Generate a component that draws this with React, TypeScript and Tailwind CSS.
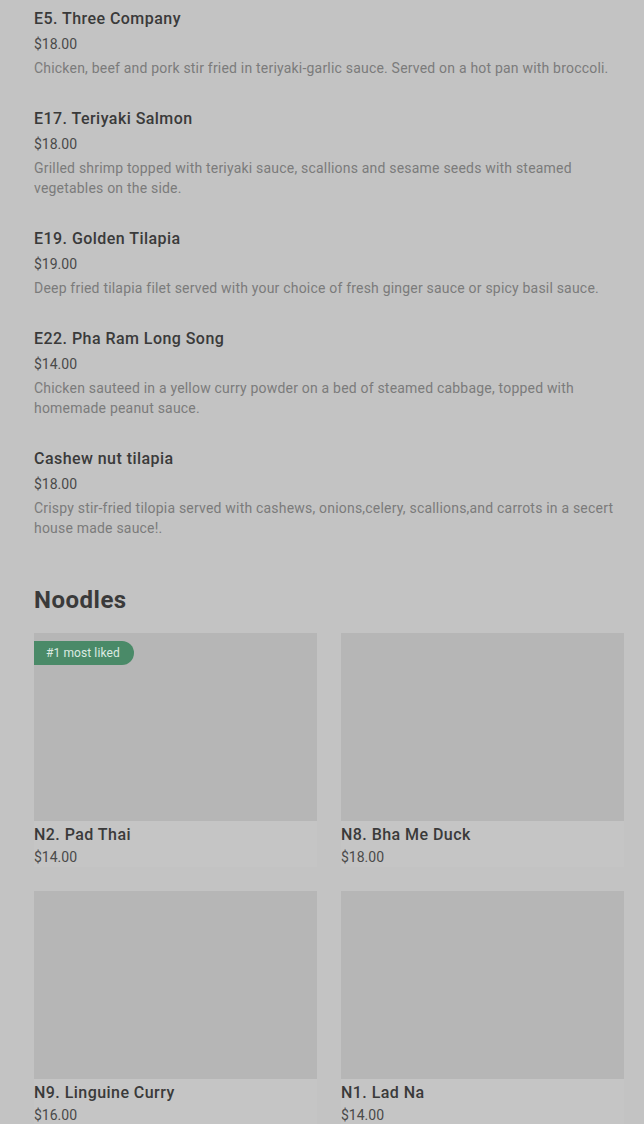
import React from 'react';

type Entree = { name: string; price: string; desc: string };
type Noodle = { name: string; price: string; badge?: string };

const ENTREES: Entree[] = [
  {
    name: 'E5. Three Company',
    price: '$18.00',
    desc: 'Chicken, beef and pork stir fried in teriyaki-garlic sauce. Served on a hot pan with broccoli.',
  },
  {
    name: 'E17. Teriyaki Salmon',
    price: '$18.00',
    desc: 'Grilled shrimp topped with teriyaki sauce, scallions and sesame seeds with steamed vegetables on the side.',
  },
  {
    name: 'E19. Golden Tilapia',
    price: '$19.00',
    desc: 'Deep fried tilapia filet served with your choice of fresh ginger sauce or spicy basil sauce.',
  },
  {
    name: 'E22. Pha Ram Long Song',
    price: '$14.00',
    desc: 'Chicken sauteed in a yellow curry powder on a bed of steamed cabbage, topped with homemade peanut sauce.',
  },
  {
    name: 'Cashew nut tilapia',
    price: '$18.00',
    desc: 'Crispy stir-fried tilopia served with cashews, onions,celery, scallions,and carrots in a secert house made sauce!.',
  },
];

const NOODLES: Noodle[] = [
  { name: 'N2. Pad Thai', price: '$14.00', badge: '#1 most liked' },
  { name: 'N8. Bha Me Duck', price: '$18.00' },
  { name: 'N9. Linguine Curry', price: '$16.00' },
  { name: 'N1. Lad Na', price: '$14.00' },
];

export default function App() {
  return (
    <div className="min-h-[1124px] bg-[#c3c3c3] pl-[34px] pr-[20px] pt-[7px] font-['Roboto',sans-serif]">
      {/* list items */}
      <div className="flex flex-col gap-[29px]">
        {ENTREES.map(item => (
          <div key={item.name} className="flex flex-col">
            <span className="text-[16px] leading-[24px] font-medium text-[#3a3a3a] tracking-[0.45px]">{item.name}</span>
            <span className="mt-[3px] text-[14px] leading-[20px] text-[#4a4a4a]">{item.price}</span>
            <p className="mt-1 text-[14px] leading-[20px] text-[#7b7b7b] tracking-[0.2px]">{item.desc}</p>
          </div>
        ))}
      </div>

      <h2 className="mt-[46px] text-[24px] leading-[32px] font-bold text-[#3a3a3a] tracking-[0.5px]">Noodles</h2>

      <div className="mt-[17px] grid grid-cols-2 gap-x-6 gap-y-6">
        {NOODLES.map(n => (
          <div key={n.name} className="flex flex-col bg-[#c5c5c5]">
            <div className="relative h-[188px] bg-[#b6b6b6]">
              {n.badge && (
                <span className="absolute left-0 top-2 flex h-6 items-center rounded-r-full bg-[#4a8a68] pl-3 pr-[14px] text-[12px] text-[#dcebe2] tracking-[0.1px]">
                  {n.badge}
                </span>
              )}
            </div>
            <span className="mt-[2px] text-[16px] leading-[24px] font-medium text-[#3a3a3a] tracking-[0.45px]">{n.name}</span>
            <span className="text-[14px] leading-[20px] text-[#4a4a4a]">{n.price}</span>
          </div>
        ))}
      </div>
    </div>
  );
}
